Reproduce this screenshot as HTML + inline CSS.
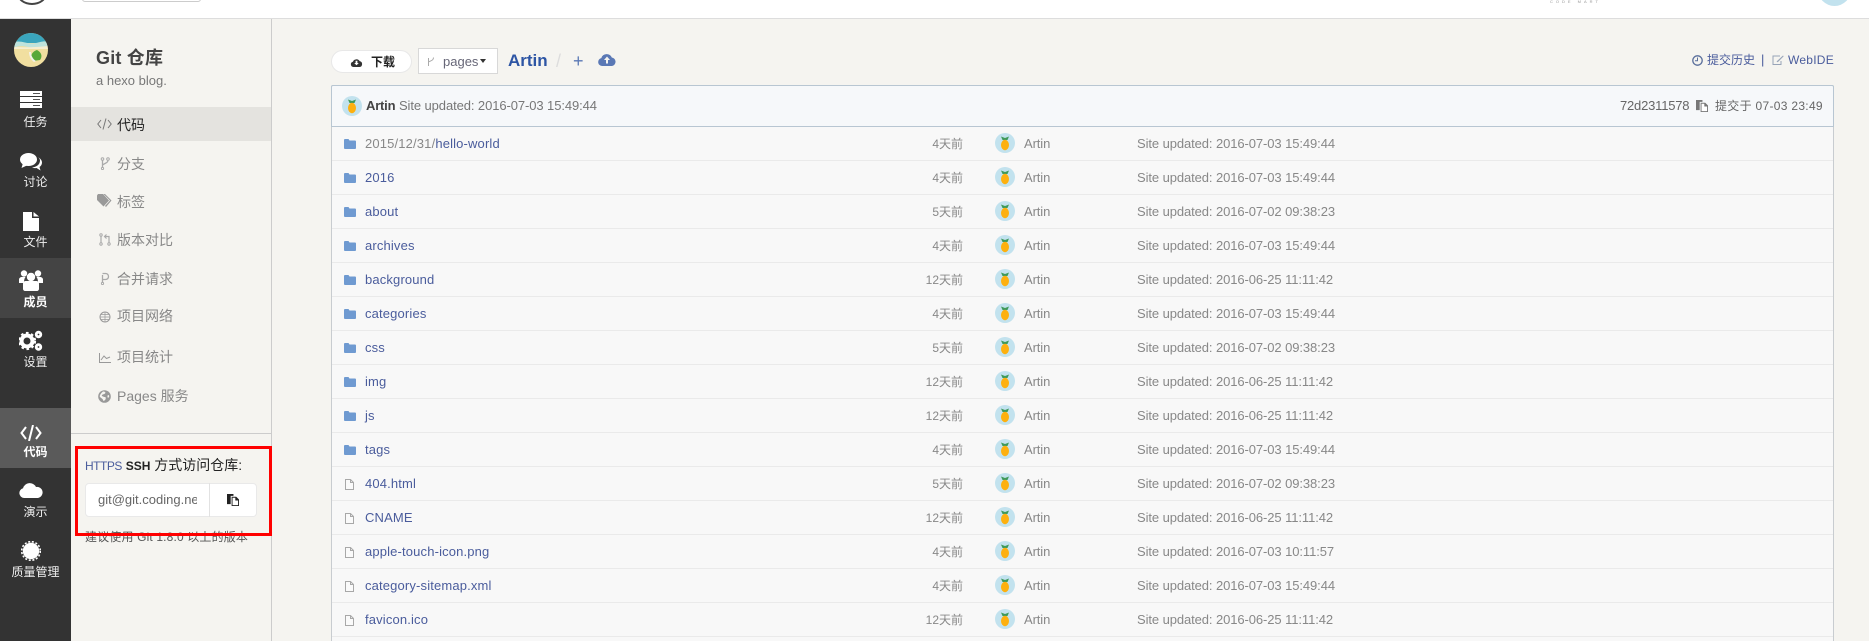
<!DOCTYPE html>
<html lang="zh"><head><meta charset="utf-8"><title>Git 仓库</title>
<style>
html,body{margin:0;padding:0;overflow:hidden;width:1869px;height:641px}
body{position:relative;background:#f5f4f0;font-family:"Liberation Sans","Noto Sans CJK SC",sans-serif;font-size:13px;color:#555}
#wrap{position:absolute;left:0;top:0;width:1869px;height:641px;overflow:hidden}
.a{position:absolute;white-space:nowrap}
svg{display:block}
#top{left:0;top:0;width:1869px;height:18px;background:#fff;border-bottom:1px solid #ddd}
#side{left:0;top:19px;width:71px;height:622px;background:#333}
.si{position:absolute;left:0;width:71px;height:60px}
.si span{position:absolute;left:0;right:0;text-align:center;top:36px;font-size:12px;line-height:16px;color:#eee}
.si svg{position:absolute;left:20px;top:13px}
#panel{left:71px;top:19px;width:200px;height:622px;background:#f5f4f0;border-right:1px solid #ccc}
.mi{position:absolute;left:117px;font-size:14px;line-height:18px;color:#888}
.mic{position:absolute;left:97px}
#box{left:331px;top:85px;width:1501px;height:570px;border:1px solid #c8ccd0;border-radius:2px;background:#f8f8f8;box-sizing:content-box}
#cbar{left:331px;top:85px;width:1501px;height:40px;box-sizing:content-box;background:#f6f8fa;border:1px solid #b8c6d2;border-radius:2px 2px 0 0}
.r{position:absolute;left:332px;width:1501px;height:33px;border-bottom:1px solid #eaeaea}
.r>*{position:absolute}
.r .i{left:12px;top:12px}
.r .f{left:13px;top:12px}
.r .n{left:33px;top:0;line-height:33px;color:#4a5c9c;letter-spacing:.15px}
.r .n i{font-style:normal;color:#888}
.r .t{right:870px;top:0;line-height:34px;font-size:12px;color:#888}
.r .v{left:663px;top:6px}
.r .u{left:692px;top:0;line-height:33px;color:#888;letter-spacing:-.1px}
.r .m{left:805px;top:0;line-height:33px;color:#888;letter-spacing:-.09px}
</style></head><body><div id="wrap">
<svg width="0" height="0" style="position:absolute"><defs>
<symbol id="pine" viewBox="0 0 20 20"><circle cx="10" cy="10" r="10" fill="#c2e2ee"/><path d="M6 3.500 10 5l4-1.500L12.500 7h-5z" fill="#3f9a5c"/><ellipse cx="10" cy="12" rx="4" ry="5.200" fill="#fdb00f"/></symbol>
<symbol id="fold" viewBox="0 0 12 10"><path d="M1 0h3.500l1 1.500H11a1 1 0 0 1 1 1V9a1 1 0 0 1-1 1H1a1 1 0 0 1-1-1V1a1 1 0 0 1 1-1z" fill="#6f9ad1"/></symbol>
<symbol id="file" viewBox="0 0 9 11"><path d="M.5.500h5l3 3v7h-8zM5.500.500v3h3" fill="#fafafa" stroke="#a8a8a8"/></symbol>
<symbol id="copy" viewBox="0 0 13 13"><path d="M0 0h7v2H4v9H0z" fill="currentColor"/><path d="M5 3h5l3 3v7H5z" fill="currentColor"/><path d="M9 4v3h3v5H6V4z" fill="#fff"/></symbol>
</defs></svg>

<div class="a" id="top"></div>
<div class="a" style="left:17px;top:-18px;width:26px;height:19px;border:2px solid #444;border-radius:50%"></div>
<div class="a" style="left:82px;top:-8px;width:117px;height:8px;border:1px solid #ccc;border-radius:3px;background:#fff"></div>
<div class="a" style="left:1550px;top:-1px;font-size:4px;letter-spacing:3px;line-height:5px;color:#999">CODE MART</div>
<div class="a" style="left:1818px;top:-27px;width:33px;height:33px;border-radius:50%;background:#c2e2ee"></div>

<div class="a" id="side">
<div class="si" style="top:59px"><svg width="22" height="17" viewBox="0 0 22 17"><path d="M0 0h22v5H0zM0 6h22v5H0zM0 12h22v5H0z" fill="#fff"/><path d="M13 2.500h7M13 8.500h7M13 14.500h7" stroke="#555" stroke-width="1"/></svg><span>任务</span></div>
<div class="si" style="top:119px"><svg width="22" height="18" viewBox="0 0 22 18" style="top:15px"><ellipse cx="8.500" cy="6.500" rx="8.500" ry="6.500" fill="#fff"/><path d="M3 10 1.500 15 8 12z" fill="#fff"/><path d="M18 4c2.500 1.500 4 3.500 4 5.500 0 2-1 3.500-2.500 4.500l1 3.500-4-2.500c-1.500.3-3 .2-4.500-.5 4.500-.5 8-3 8-7 0-1.200-.8-2.500-2-3.500z" fill="#fff"/></svg><span>讨论</span></div>
<div class="si" style="top:179px"><svg width="16" height="19" viewBox="0 0 16 19" style="left:23px;top:14px"><path d="M0 0h9v6h7v13H0zM10.500 0 16 4.500h-5.500z" fill="#fff"/></svg><span>文件</span></div>
<div class="si" style="top:239px;background:#444"><svg width="24" height="21" viewBox="0 0 24 21" style="left:19px;top:12px"><circle cx="5" cy="3.500" r="3.200" fill="#fff"/><circle cx="19" cy="3.500" r="3.200" fill="#fff"/><path d="M0 13V9.500C0 8 1.500 7 3 7h3.500C5 9 5 11 5 13zM24 13V9.500C24 8 22.500 7 21 7h-3.500c1.500 2 1.500 4 1.500 6z" fill="#fff"/><circle cx="12" cy="7" r="4.200" fill="#fff"/><path d="M4 14c0-2 1-3 3-3h10c2 0 3 1 3 3v5c0 1-1 2-2 2H6c-1 0-2-1-2-2z" fill="#fff"/></svg><span style="font-weight:bold;color:#fff">成员</span></div>
<div class="si" style="top:299px"><svg width="24" height="22" viewBox="0 0 24 22" style="left:19px;top:12px"><circle cx="8" cy="11" r="5.500" fill="none" stroke="#fff" stroke-width="4"/><circle cx="8" cy="11" r="8" fill="none" stroke="#fff" stroke-width="2.200" stroke-dasharray="2.600 2.600"/><circle cx="19.500" cy="4.500" r="2.300" fill="none" stroke="#fff" stroke-width="2.800"/><circle cx="19.500" cy="17" r="2.300" fill="none" stroke="#fff" stroke-width="2.800"/></svg><span>设置</span></div>
<div class="si" style="top:389px;background:#5a5a5a"><svg width="22" height="16" viewBox="0 0 22 16" style="left:20px;top:17px"><path d="M6 2 1.500 8 6 14M16 2l4.500 6L16 14M13 0 9 16" fill="none" stroke="#fff" stroke-width="2"/></svg><span style="font-weight:bold;color:#fff">代码</span></div>
<div class="si" style="top:449px"><svg width="24" height="16" viewBox="0 0 24 16" style="left:19px;top:14px"><path d="M5 16a5 5 0 0 1-1-9.800A7 7 0 0 1 17 5a5.500 5.500 0 0 1 2 11z" fill="#fff"/></svg><span>演示</span></div>
<div class="si" style="top:509px"><svg width="20" height="20" viewBox="0 0 20 20" style="left:21px;top:13px"><circle cx="10" cy="10" r="8.200" fill="#fff"/><circle cx="10" cy="10" r="9.300" fill="none" stroke="#fff" stroke-width="1.600" stroke-dasharray="2 1.700"/></svg><span>质量管理</span></div>
</div>
<div class="a" style="left:14px;top:33px;width:34px;height:34px;border-radius:50%;overflow:hidden;background:#f1dfa0"><svg width="34" height="34" viewBox="0 0 34 34"><rect width="34" height="10" fill="#3aa5bd"/><path d="M0 9c8-2 14 3 22 1s8-2 12-1v4c-8 1-12 3-20 1S4 14 0 14z" fill="#bfe3dc"/><path d="M0 14c8 0 14 1 34-1v3H0z" fill="#f7eed0"/><path d="M19 28c-3-4-2-9 4-11 4 2 6 6 3 10z" fill="#58a83a"/><path d="M15 19c0 4 2 8 5 10l2-1c-3-2-5-5-5-9z" fill="#f2f2ea"/></svg></div>

<div class="a" id="panel"></div>
<div class="a" style="left:96px;top:47px;font-size:18px;line-height:22px;font-weight:bold;color:#444;letter-spacing:.2px">Git 仓库</div>
<div class="a" style="left:96px;top:72px;font-size:13px;line-height:18px;color:#777">a hexo blog.</div>
<div class="a" style="left:71px;top:107px;width:200px;height:34px;background:#e4e3df"></div>
<div class="a mi" style="top:116px;color:#222">代码</div>
<svg class="a mic" style="top:118px" width="15" height="12" viewBox="0 0 15 12"><path d="M4 2 .8 6 4 10M11 2l3.200 4L11 10M9 .5 6 11.500" fill="none" stroke="#777"/></svg>
<div class="a mi" style="top:155px">分支</div>
<svg class="a mic" style="top:157px;left:100px" width="10" height="13" viewBox="0 0 10 13"><path d="M2.500 3v8M8 3c0 3-3 3-5.500 5" fill="none" stroke="#aaa" stroke-width="1.300"/><circle cx="2.500" cy="2" r="1.300" fill="none" stroke="#aaa"/><circle cx="8" cy="2" r="1.300" fill="none" stroke="#aaa"/><circle cx="2.500" cy="11.500" r="1.100" fill="none" stroke="#aaa"/></svg>
<div class="a mi" style="top:193px">标签</div>
<svg class="a mic" style="top:194px" width="15" height="14" viewBox="0 0 15 14"><path d="M0 1.500 1 0h5l6 6.500-5.500 6L0 6z" fill="#999"/><path d="M8 0l6.500 6.500-5.500 6.500-1-1 5-5.500L6.500 0z" fill="#999"/></svg>
<div class="a mi" style="top:231px">版本对比</div>
<svg class="a mic" style="top:233px;left:99px" width="12" height="13" viewBox="0 0 12 13"><path d="M2 3v6.500M10 10V3.500H6M7.500 1.500 5.500 3.500l2 2" fill="none" stroke="#aaa" stroke-width="1.200"/><circle cx="2" cy="2" r="1.200" fill="none" stroke="#aaa"/><circle cx="2" cy="11" r="1.200" fill="none" stroke="#aaa"/><circle cx="10" cy="11" r="1.200" fill="none" stroke="#aaa"/></svg>
<div class="a mi" style="top:270px">合并请求</div>
<svg class="a mic" style="top:272px;left:100px" width="10" height="13" viewBox="0 0 10 13"><path d="M2.500 3v8M2.500 1.500h3c4 0 4 6 0 6h-3" fill="none" stroke="#aaa" stroke-width="1.300"/><circle cx="2.500" cy="11.500" r="1.100" fill="none" stroke="#aaa"/></svg>
<div class="a mi" style="top:307px">项目网络</div>
<svg class="a mic" style="top:311px;left:99px" width="12" height="12" viewBox="0 0 12 12"><circle cx="6" cy="6" r="5" fill="none" stroke="#999"/><path d="M1 6h10M6 1v10M2 3.500h8M2 8.500h8" stroke="#999" stroke-width=".7" fill="none"/></svg>
<div class="a mi" style="top:348px">项目统计</div>
<svg class="a mic" style="top:353px;left:99px" width="12" height="10" viewBox="0 0 12 10"><path d="M.5 0v9.500H12M2 7l3-4 2.500 2.500L11 4" fill="none" stroke="#999"/></svg>
<div class="a mi" style="top:387px">Pages 服务</div>
<svg class="a mic" style="top:390px;left:98px" width="13" height="13" viewBox="0 0 13 13"><circle cx="6.500" cy="6.500" r="6.300" fill="#999"/><path d="M5 1.500c2 0 3 1 2 2S5 4 4 5s2 2 3 2 1 2 0 3-2 1-2 0-2-2-3-3 1-4 3-5.500zM10 5c1 0 1.500 1 1 2l-1 1c-.5-1-1-2 0-3z" fill="#f5f4f0"/></svg>
<div class="a" style="left:71px;top:433px;width:200px;height:1px;background:#ccc"></div>

<div class="a" style="left:85px;top:456px;font-size:14px;line-height:18px;color:#222"><span style="color:#4a5c9c;font-size:12px;letter-spacing:-.5px">HTTPS</span> <b style="font-size:12px">SSH</b> 方式访问仓库:</div>
<div class="a" style="left:85px;top:483px;width:172px;height:34px;box-sizing:border-box;border:1px solid #e9e9e9;border-radius:4px;background:#fff"></div>
<div class="a" style="left:209px;top:483px;width:1px;height:34px;background:#e2e2e2"></div>
<div class="a" style="left:98px;top:483px;width:99px;overflow:hidden;line-height:34px;font-size:13px;color:#666">git@git.coding.net:Artin/blog.git</div>
<svg class="a" style="left:227px;top:494px;color:#222" width="12" height="12"><use href="#copy"/></svg>
<div class="a" style="left:85px;top:528px;font-size:12px;line-height:18px;color:#555;letter-spacing:.15px">建议使用 Git 1.8.0 以上的版本</div>
<div class="a" style="left:75px;top:446px;width:197px;height:90px;box-sizing:border-box;border:3px solid #f00"></div>

<div class="a" style="left:331px;top:50px;width:81px;height:23px;box-sizing:border-box;border:1px solid #e8e8e8;border-radius:12px;background:#fff"></div>
<svg class="a" style="left:350px;top:58px" width="13" height="9" viewBox="0 0 13 10"><path d="M3 10a3 3 0 0 1-.5-5.900A4.200 4.200 0 0 1 10 3.500a3.300 3.300 0 0 1 0 6.500z" fill="#333"/><path d="M5.500 3h2v2.500H9L6.500 8 4 5.500h1.500z" fill="#fff"/></svg>
<div class="a" style="left:371px;top:53px;font-size:12px;line-height:18px;font-weight:bold;color:#222">下载</div>
<div class="a" style="left:418px;top:48px;width:80px;height:26px;box-sizing:border-box;border:1px solid #d8d8d8;background:#fff"></div>
<svg class="a" style="left:427px;top:56px" width="8" height="11" viewBox="0 0 8 11"><path d="M1.500 2v8M6.500 1.500c0 3-2.500 3-5 4.500" fill="none" stroke="#aaa"/></svg>
<div class="a" style="left:443px;top:53px;font-size:13px;line-height:18px;color:#667">pages</div>
<div class="a" style="left:480px;top:59px;width:0;height:0;border:3.500px solid transparent;border-top:4px solid #333;border-bottom:0"></div>
<div class="a" style="left:508px;top:50px;font-size:17px;line-height:22px;font-weight:bold;color:#2d55a4">Artin</div>
<div class="a" style="left:556px;top:50px;font-size:18px;line-height:22px;color:#ddd">/</div>
<div class="a" style="left:573px;top:50px;font-size:18px;line-height:22px;color:#5a78b5">+</div>
<svg class="a" style="left:598px;top:53px" width="18" height="13" viewBox="0 0 18 13"><path d="M4 13a4 4 0 0 1-.7-7.900A5.600 5.600 0 0 1 13.800 4.500a4.300 4.300 0 0 1 .2 8.500z" fill="#5a78b5"/><path d="M9 3.500 12 7h-2v3.500H8V7H6z" fill="#f5f4f0"/></svg>

<svg class="a" style="left:1692px;top:55px" width="11" height="11" viewBox="0 0 11 11"><circle cx="5.500" cy="5.500" r="4.700" fill="none" stroke="#5a6f9c" stroke-width="1.300"/><path d="M5.500 2.500v3.200H3" fill="none" stroke="#5a6f9c"/></svg>
<div class="a" style="left:1707px;top:51px;font-size:12px;line-height:18px;color:#4a5c9c">提交历史</div>
<div class="a" style="left:1761px;top:51px;font-size:13px;line-height:18px;color:#4a5c9c">|</div>
<svg class="a" style="left:1772px;top:55px" width="12" height="10" viewBox="0 0 12 10"><path d="M8 1H1v8.500h8V6" fill="none" stroke="#98a4b8"/><path d="M4.500 6.500 11 .5l.7.8-6 6z" fill="#98a4b8"/></svg>
<div class="a" style="left:1788px;top:51px;font-size:12px;line-height:18px;color:#4a5c9c;letter-spacing:.25px">WebIDE</div>

<div class="a" id="box"></div>
<div class="a" id="cbar"></div>
<svg class="a" style="left:342px;top:96px" width="20" height="20"><use href="#pine"/></svg>
<div class="a" style="left:366px;top:97px;line-height:18px;color:#444"><b style="letter-spacing:-.2px">Artin</b> <span style="color:#777;letter-spacing:-.09px">Site updated: 2016-07-03 15:49:44</span></div>
<div class="a" style="left:1620px;top:97px;line-height:18px;color:#666;letter-spacing:-.2px">72d2311578</div>
<svg class="a" style="left:1696px;top:100px;color:#777" width="12" height="12"><use href="#copy"/></svg>
<div class="a" style="left:1715px;top:97px;line-height:18px;font-size:12px;color:#666;letter-spacing:.3px">提交于 07-03 23:49</div>

<div class="r" style="top:127px"><svg class="i" width="12" height="10"><use href="#fold"/></svg><span class="n"><i>2015/12/31/</i>hello-world</span><span class="t">4天前</span><svg class="v" width="20" height="20"><use href="#pine"/></svg><span class="u">Artin</span><span class="m">Site updated: 2016-07-03 15:49:44</span></div>
<div class="r" style="top:161px"><svg class="i" width="12" height="10"><use href="#fold"/></svg><span class="n">2016</span><span class="t">4天前</span><svg class="v" width="20" height="20"><use href="#pine"/></svg><span class="u">Artin</span><span class="m">Site updated: 2016-07-03 15:49:44</span></div>
<div class="r" style="top:195px"><svg class="i" width="12" height="10"><use href="#fold"/></svg><span class="n">about</span><span class="t">5天前</span><svg class="v" width="20" height="20"><use href="#pine"/></svg><span class="u">Artin</span><span class="m">Site updated: 2016-07-02 09:38:23</span></div>
<div class="r" style="top:229px"><svg class="i" width="12" height="10"><use href="#fold"/></svg><span class="n">archives</span><span class="t">4天前</span><svg class="v" width="20" height="20"><use href="#pine"/></svg><span class="u">Artin</span><span class="m">Site updated: 2016-07-03 15:49:44</span></div>
<div class="r" style="top:263px"><svg class="i" width="12" height="10"><use href="#fold"/></svg><span class="n">background</span><span class="t">12天前</span><svg class="v" width="20" height="20"><use href="#pine"/></svg><span class="u">Artin</span><span class="m">Site updated: 2016-06-25 11:11:42</span></div>
<div class="r" style="top:297px"><svg class="i" width="12" height="10"><use href="#fold"/></svg><span class="n">categories</span><span class="t">4天前</span><svg class="v" width="20" height="20"><use href="#pine"/></svg><span class="u">Artin</span><span class="m">Site updated: 2016-07-03 15:49:44</span></div>
<div class="r" style="top:331px"><svg class="i" width="12" height="10"><use href="#fold"/></svg><span class="n">css</span><span class="t">5天前</span><svg class="v" width="20" height="20"><use href="#pine"/></svg><span class="u">Artin</span><span class="m">Site updated: 2016-07-02 09:38:23</span></div>
<div class="r" style="top:365px"><svg class="i" width="12" height="10"><use href="#fold"/></svg><span class="n">img</span><span class="t">12天前</span><svg class="v" width="20" height="20"><use href="#pine"/></svg><span class="u">Artin</span><span class="m">Site updated: 2016-06-25 11:11:42</span></div>
<div class="r" style="top:399px"><svg class="i" width="12" height="10"><use href="#fold"/></svg><span class="n">js</span><span class="t">12天前</span><svg class="v" width="20" height="20"><use href="#pine"/></svg><span class="u">Artin</span><span class="m">Site updated: 2016-06-25 11:11:42</span></div>
<div class="r" style="top:433px"><svg class="i" width="12" height="10"><use href="#fold"/></svg><span class="n">tags</span><span class="t">4天前</span><svg class="v" width="20" height="20"><use href="#pine"/></svg><span class="u">Artin</span><span class="m">Site updated: 2016-07-03 15:49:44</span></div>
<div class="r" style="top:467px"><svg class="f" width="9" height="11"><use href="#file"/></svg><span class="n">404.html</span><span class="t">5天前</span><svg class="v" width="20" height="20"><use href="#pine"/></svg><span class="u">Artin</span><span class="m">Site updated: 2016-07-02 09:38:23</span></div>
<div class="r" style="top:501px"><svg class="f" width="9" height="11"><use href="#file"/></svg><span class="n">CNAME</span><span class="t">12天前</span><svg class="v" width="20" height="20"><use href="#pine"/></svg><span class="u">Artin</span><span class="m">Site updated: 2016-06-25 11:11:42</span></div>
<div class="r" style="top:535px"><svg class="f" width="9" height="11"><use href="#file"/></svg><span class="n">apple-touch-icon.png</span><span class="t">4天前</span><svg class="v" width="20" height="20"><use href="#pine"/></svg><span class="u">Artin</span><span class="m">Site updated: 2016-07-03 10:11:57</span></div>
<div class="r" style="top:569px"><svg class="f" width="9" height="11"><use href="#file"/></svg><span class="n">category-sitemap.xml</span><span class="t">4天前</span><svg class="v" width="20" height="20"><use href="#pine"/></svg><span class="u">Artin</span><span class="m">Site updated: 2016-07-03 15:49:44</span></div>
<div class="r" style="top:603px"><svg class="f" width="9" height="11"><use href="#file"/></svg><span class="n">favicon.ico</span><span class="t">12天前</span><svg class="v" width="20" height="20"><use href="#pine"/></svg><span class="u">Artin</span><span class="m">Site updated: 2016-06-25 11:11:42</span></div>
</div></body></html>
